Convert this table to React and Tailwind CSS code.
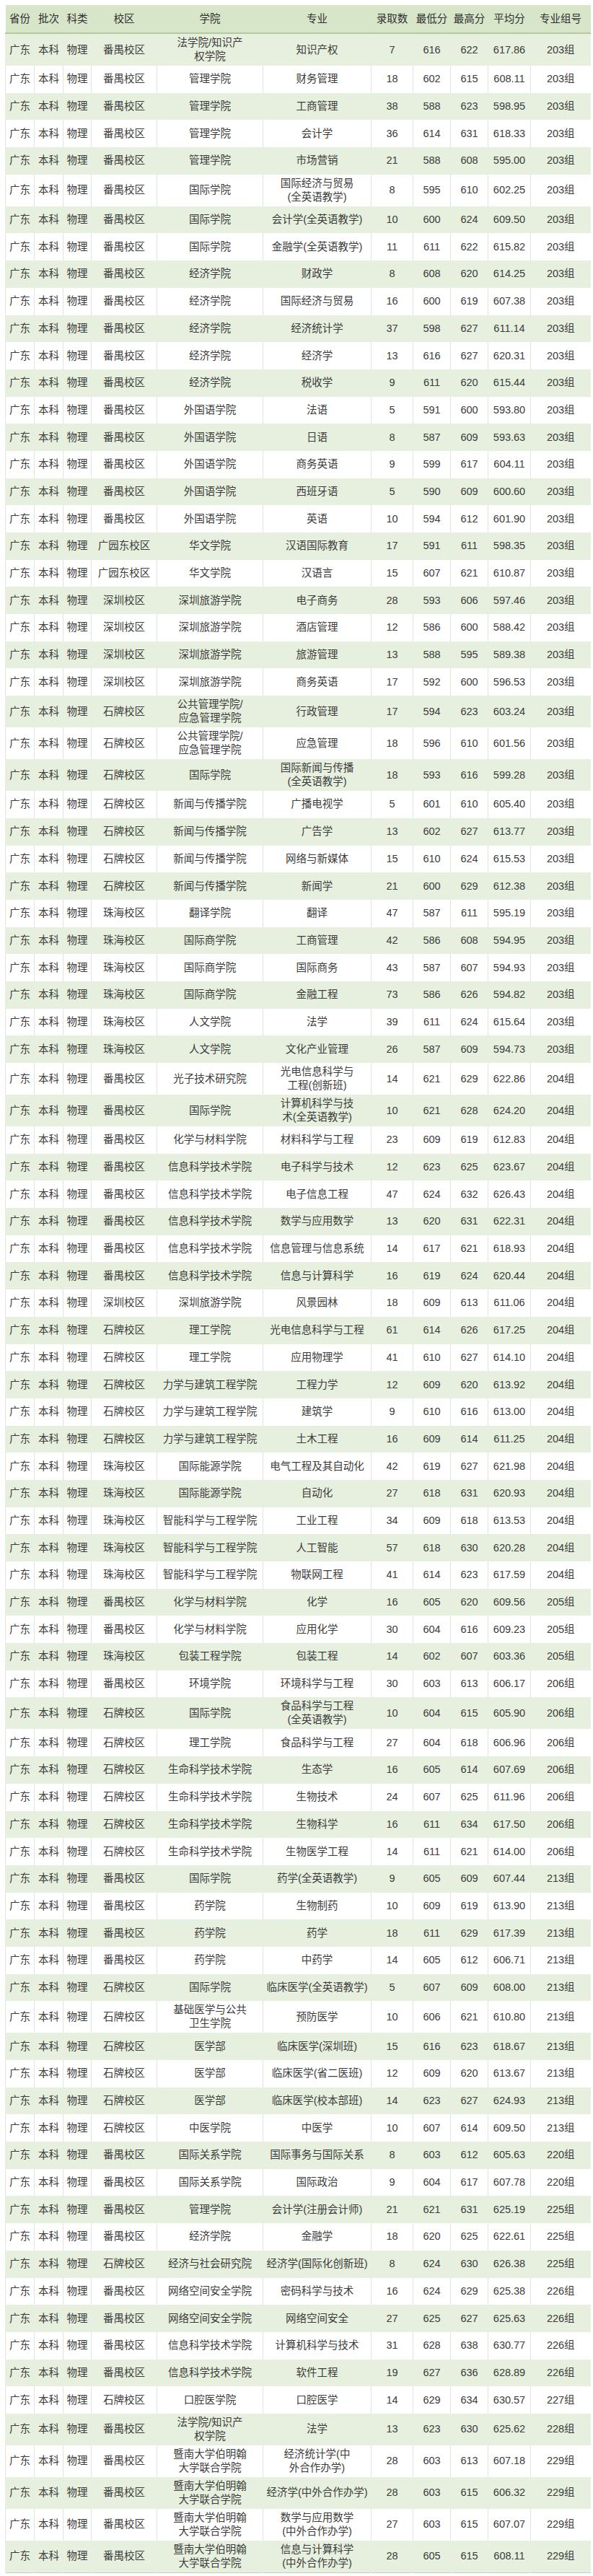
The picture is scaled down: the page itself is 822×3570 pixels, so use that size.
import React from 'react';

const HEAD = ['省份', '批次', '科类', '校区', '学院', '专业', '录取数', '最低分', '最高分', '平均分', '专业组号'];
const WIDTHS = ['w-[40px]', 'w-[40px]', 'w-[39px]', 'w-[91px]', 'w-[147px]', 'w-[150px]', 'w-[58px]', 'w-[52px]', 'w-[52px]', 'w-[59px]', 'w-[83px]'];

// campus, college, major, count, min, max, avg, group
const ROWS = [
  ['番禺校区', '法学院/知识产\n权学院', '知识产权', 7, 616, 622, '617.86', '203组'],
  ['番禺校区', '管理学院', '财务管理', 18, 602, 615, '608.11', '203组'],
  ['番禺校区', '管理学院', '工商管理', 38, 588, 623, '598.95', '203组'],
  ['番禺校区', '管理学院', '会计学', 36, 614, 631, '618.33', '203组'],
  ['番禺校区', '管理学院', '市场营销', 21, 588, 608, '595.00', '203组'],
  ['番禺校区', '国际学院', '国际经济与贸易\n(全英语教学)', 8, 595, 610, '602.25', '203组'],
  ['番禺校区', '国际学院', '会计学(全英语教学)', 10, 600, 624, '609.50', '203组'],
  ['番禺校区', '国际学院', '金融学(全英语教学)', 11, 611, 622, '615.82', '203组'],
  ['番禺校区', '经济学院', '财政学', 8, 608, 620, '614.25', '203组'],
  ['番禺校区', '经济学院', '国际经济与贸易', 16, 600, 619, '607.38', '203组'],
  ['番禺校区', '经济学院', '经济统计学', 37, 598, 627, '611.14', '203组'],
  ['番禺校区', '经济学院', '经济学', 13, 616, 627, '620.31', '203组'],
  ['番禺校区', '经济学院', '税收学', 9, 611, 620, '615.44', '203组'],
  ['番禺校区', '外国语学院', '法语', 5, 591, 600, '593.80', '203组'],
  ['番禺校区', '外国语学院', '日语', 8, 587, 609, '593.63', '203组'],
  ['番禺校区', '外国语学院', '商务英语', 9, 599, 617, '604.11', '203组'],
  ['番禺校区', '外国语学院', '西班牙语', 5, 590, 609, '600.60', '203组'],
  ['番禺校区', '外国语学院', '英语', 10, 594, 612, '601.90', '203组'],
  ['广园东校区', '华文学院', '汉语国际教育', 17, 591, 611, '598.35', '203组'],
  ['广园东校区', '华文学院', '汉语言', 15, 607, 621, '610.87', '203组'],
  ['深圳校区', '深圳旅游学院', '电子商务', 28, 593, 606, '597.46', '203组'],
  ['深圳校区', '深圳旅游学院', '酒店管理', 12, 586, 600, '588.42', '203组'],
  ['深圳校区', '深圳旅游学院', '旅游管理', 13, 588, 595, '589.38', '203组'],
  ['深圳校区', '深圳旅游学院', '商务英语', 17, 592, 600, '596.53', '203组'],
  ['石牌校区', '公共管理学院/\n应急管理学院', '行政管理', 17, 594, 623, '603.24', '203组'],
  ['石牌校区', '公共管理学院/\n应急管理学院', '应急管理', 18, 596, 610, '601.56', '203组'],
  ['石牌校区', '国际学院', '国际新闻与传播\n(全英语教学)', 18, 593, 616, '599.28', '203组'],
  ['石牌校区', '新闻与传播学院', '广播电视学', 5, 601, 610, '605.40', '203组'],
  ['石牌校区', '新闻与传播学院', '广告学', 13, 602, 627, '613.77', '203组'],
  ['石牌校区', '新闻与传播学院', '网络与新媒体', 15, 610, 624, '615.53', '203组'],
  ['石牌校区', '新闻与传播学院', '新闻学', 21, 600, 629, '612.38', '203组'],
  ['珠海校区', '翻译学院', '翻译', 47, 587, 611, '595.19', '203组'],
  ['珠海校区', '国际商学院', '工商管理', 42, 586, 608, '594.95', '203组'],
  ['珠海校区', '国际商学院', '国际商务', 43, 587, 607, '594.93', '203组'],
  ['珠海校区', '国际商学院', '金融工程', 73, 586, 626, '594.82', '203组'],
  ['珠海校区', '人文学院', '法学', 39, 611, 624, '615.64', '203组'],
  ['珠海校区', '人文学院', '文化产业管理', 26, 587, 609, '594.73', '203组'],
  ['番禺校区', '光子技术研究院', '光电信息科学与\n工程(创新班)', 14, 621, 629, '622.86', '204组'],
  ['番禺校区', '国际学院', '计算机科学与技\n术(全英语教学)', 10, 621, 628, '624.20', '204组'],
  ['番禺校区', '化学与材料学院', '材料科学与工程', 23, 609, 619, '612.83', '204组'],
  ['番禺校区', '信息科学技术学院', '电子科学与技术', 12, 623, 625, '623.67', '204组'],
  ['番禺校区', '信息科学技术学院', '电子信息工程', 47, 624, 632, '626.43', '204组'],
  ['番禺校区', '信息科学技术学院', '数学与应用数学', 13, 620, 631, '622.31', '204组'],
  ['番禺校区', '信息科学技术学院', '信息管理与信息系统', 14, 617, 621, '618.93', '204组'],
  ['番禺校区', '信息科学技术学院', '信息与计算科学', 16, 619, 624, '620.44', '204组'],
  ['深圳校区', '深圳旅游学院', '风景园林', 18, 609, 613, '611.06', '204组'],
  ['石牌校区', '理工学院', '光电信息科学与工程', 61, 614, 626, '617.25', '204组'],
  ['石牌校区', '理工学院', '应用物理学', 41, 610, 627, '614.10', '204组'],
  ['石牌校区', '力学与建筑工程学院', '工程力学', 12, 609, 620, '613.92', '204组'],
  ['石牌校区', '力学与建筑工程学院', '建筑学', 9, 610, 616, '613.00', '204组'],
  ['石牌校区', '力学与建筑工程学院', '土木工程', 16, 609, 614, '611.25', '204组'],
  ['珠海校区', '国际能源学院', '电气工程及其自动化', 42, 619, 627, '621.98', '204组'],
  ['珠海校区', '国际能源学院', '自动化', 27, 618, 631, '620.93', '204组'],
  ['珠海校区', '智能科学与工程学院', '工业工程', 34, 609, 618, '613.53', '204组'],
  ['珠海校区', '智能科学与工程学院', '人工智能', 57, 618, 630, '620.28', '204组'],
  ['珠海校区', '智能科学与工程学院', '物联网工程', 41, 614, 623, '617.59', '204组'],
  ['番禺校区', '化学与材料学院', '化学', 16, 605, 620, '609.56', '205组'],
  ['番禺校区', '化学与材料学院', '应用化学', 30, 604, 616, '609.23', '205组'],
  ['珠海校区', '包装工程学院', '包装工程', 14, 602, 607, '603.36', '205组'],
  ['番禺校区', '环境学院', '环境科学与工程', 30, 603, 613, '606.17', '206组'],
  ['石牌校区', '国际学院', '食品科学与工程\n(全英语教学)', 10, 604, 615, '605.90', '206组'],
  ['石牌校区', '理工学院', '食品科学与工程', 27, 604, 618, '606.96', '206组'],
  ['石牌校区', '生命科学技术学院', '生态学', 16, 605, 614, '607.69', '206组'],
  ['石牌校区', '生命科学技术学院', '生物技术', 24, 607, 625, '611.96', '206组'],
  ['石牌校区', '生命科学技术学院', '生物科学', 16, 611, 634, '617.50', '206组'],
  ['石牌校区', '生命科学技术学院', '生物医学工程', 14, 611, 621, '614.00', '206组'],
  ['番禺校区', '国际学院', '药学(全英语教学)', 9, 605, 609, '607.44', '213组'],
  ['番禺校区', '药学院', '生物制药', 10, 609, 619, '613.90', '213组'],
  ['番禺校区', '药学院', '药学', 18, 611, 629, '617.39', '213组'],
  ['番禺校区', '药学院', '中药学', 14, 605, 612, '606.71', '213组'],
  ['石牌校区', '国际学院', '临床医学(全英语教学)', 5, 607, 609, '608.00', '213组'],
  ['石牌校区', '基础医学与公共\n卫生学院', '预防医学', 10, 606, 621, '610.80', '213组'],
  ['石牌校区', '医学部', '临床医学(深圳班)', 15, 616, 623, '618.67', '213组'],
  ['石牌校区', '医学部', '临床医学(省二医班)', 12, 609, 620, '613.67', '213组'],
  ['石牌校区', '医学部', '临床医学(校本部班)', 14, 623, 627, '624.93', '213组'],
  ['石牌校区', '中医学院', '中医学', 10, 607, 614, '609.50', '213组'],
  ['番禺校区', '国际关系学院', '国际事务与国际关系', 8, 603, 612, '605.63', '220组'],
  ['番禺校区', '国际关系学院', '国际政治', 9, 604, 617, '607.78', '220组'],
  ['番禺校区', '管理学院', '会计学(注册会计师)', 21, 621, 631, '625.19', '225组'],
  ['番禺校区', '经济学院', '金融学', 18, 620, 625, '622.61', '225组'],
  ['石牌校区', '经济与社会研究院', '经济学(国际化创新班)', 8, 624, 630, '626.38', '225组'],
  ['番禺校区', '网络空间安全学院', '密码科学与技术', 16, 624, 629, '625.38', '226组'],
  ['番禺校区', '网络空间安全学院', '网络空间安全', 27, 625, 627, '625.63', '226组'],
  ['番禺校区', '信息科学技术学院', '计算机科学与技术', 31, 628, 638, '630.77', '226组'],
  ['番禺校区', '信息科学技术学院', '软件工程', 19, 627, 636, '628.89', '226组'],
  ['石牌校区', '口腔医学院', '口腔医学', 14, 629, 634, '630.57', '227组'],
  ['番禺校区', '法学院/知识产\n权学院', '法学', 13, 623, 630, '625.62', '228组'],
  ['番禺校区', '暨南大学伯明翰\n大学联合学院', '经济统计学(中\n外合作办学)', 28, 603, 613, '607.18', '229组'],
  ['番禺校区', '暨南大学伯明翰\n大学联合学院', '经济学(中外合作办学)', 28, 603, 615, '606.32', '229组'],
  ['番禺校区', '暨南大学伯明翰\n大学联合学院', '数学与应用数学\n(中外合作办学)', 27, 603, 615, '607.07', '229组'],
  ['番禺校区', '暨南大学伯明翰\n大学联合学院', '信息与计算科学\n(中外合作办学)', 28, 605, 615, '608.11', '229组'],
];

export default function App() {
  return (
    <div className="bg-white pt-[7px] pl-[7px] pb-[7px] font-['Liberation_Sans','Noto_Sans_CJK_SC',sans-serif] text-[14.5px] text-[#3b3b3b]">
      <table className="table-fixed border-collapse w-[811px] border-b border-[#c3d1b8]">
        <colgroup>
          {WIDTHS.map((w, i) => (
            <col key={i} className={w} />
          ))}
        </colgroup>
        <thead>
          <tr className="h-[39px] bg-[#d7e5c9] border-b-2 border-[#b2cb9f]">
            {HEAD.map((h) => (
              <th key={h} className="font-normal text-[#2e2e2e] text-center whitespace-nowrap px-0 leading-[19px]">
                {h}
              </th>
            ))}
          </tr>
        </thead>
        <tbody>
          {ROWS.map((r, idx) => {
            const green = idx % 2 === 0;
            const cells = ['广东', '本科', '物理', ...r];
            return (
              <tr key={idx} className={green ? 'h-[37.7px] bg-[#e7f0de]' : 'h-[37.7px] bg-white'}>
                {cells.map((c, j) => (
                  <td
                    key={j}
                    className={
                      green
                        ? 'text-center align-middle whitespace-pre-line px-0 py-[3px] leading-[19px] border-l border-[#e7f0de]'
                        : 'text-center align-middle whitespace-pre-line px-0 py-[3px] leading-[19px] border-l border-[#e1e5dd]'
                    }
                  >
                    {c}
                  </td>
                ))}
              </tr>
            );
          })}
        </tbody>
      </table>
    </div>
  );
}
